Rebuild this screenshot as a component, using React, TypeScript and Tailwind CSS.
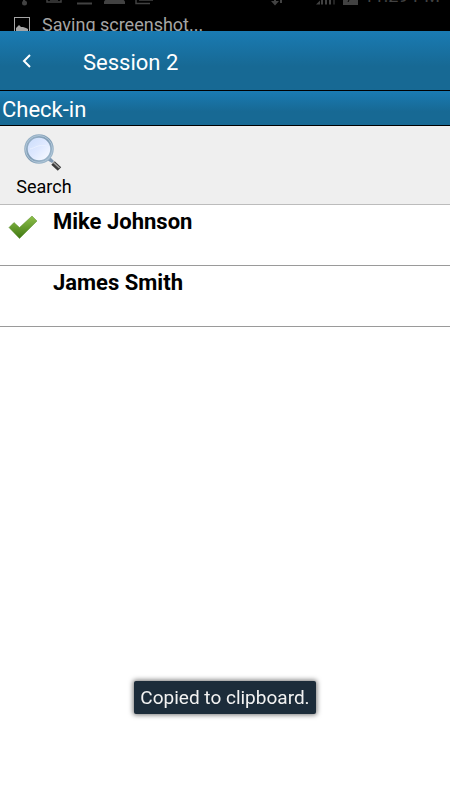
import React from 'react';

interface IAttendee {
    name: string,
    checkedIn: boolean
}

const attendees: IAttendee[] = [
    { name: 'Mike Johnson', checkedIn: true },
    { name: 'James Smith', checkedIn: false },
]

const StatusBar: React.FC = () => {
    return (
        <div className="h-[31px] overflow-hidden bg-black">
            <div className="-mt-4 flex h-7 justify-between text-[#424242]">
                <svg className="h-7 w-40" viewBox="0 0 160 28" fill="none" stroke="currentColor" strokeWidth="2" aria-hidden="true">
                    <path d="M24 10v8" />
                    <circle cx="24.500" cy="19" r="2.500" fill="currentColor" stroke="none" />
                    <path d="M47 8v10h14V8" strokeWidth="1.500" />
                    <path d="M50 16h8" strokeWidth="1.500" />
                    <path d="M77 19.500h15" />
                    <path d="M104 20v-2c0-2 3-3 6-4h9c3 1 6 2 6 4v2z" fill="currentColor" stroke="none" />
                    <path d="M136 10v9.500h14M139 16h14" strokeWidth="1.500" />
                </svg>
                <div className="flex gap-1 pr-2.5">
                    <svg className="h-7 w-[90px]" viewBox="0 0 90 28" fill="currentColor" aria-hidden="true">
                        <path d="M4 10h2v7h3l-4 4.500L1 17h3zM10 19v-7l3 4h-1v3z" />
                        <path d="M46 20.500l4-4v4zM51 14h2v6.500h-2zM55 12h2v8.500h-2zM59 10h2v10.500h-2z" />
                        <path d="M63 10h2v10.500h-2z" fill="#222222" />
                        <path d="M73 10h15v11H73z" />
                        <path d="M81 12l-3 6" stroke="#000000" />
                    </svg>
                    <span className="-mt-0.5 text-lg leading-7 whitespace-nowrap">11:29 PM</span>
                </div>
            </div>
            <div className="flex items-start pl-3.5 text-[#a5a5a5]">
                <svg className="mt-[5px] h-4 w-4 shrink-0" viewBox="0 0 16 16" fill="none" aria-hidden="true">
                    <rect x="0.500" y="0.500" width="15" height="15" stroke="currentColor" />
                    <path d="M2 14v-3l3-3 2 2 2 0 3 1 2 1v2z" fill="currentColor" />
                </svg>
                <p className="ml-3 pt-px text-lg leading-6 whitespace-nowrap">Saving screenshot...</p>
            </div>
        </div>
    )
}

const SearchIcon: React.FC = () => {
    return (
        <svg className="h-11 w-11" viewBox="0 0 44 44" fill="none" aria-hidden="true">
            <defs>
                <linearGradient id="rim" x1="0" y1="0" x2="1" y2="1">
                    <stop offset="0" stopColor="#9db6cb" />
                    <stop offset="0.500" stopColor="#7f9bb3" />
                    <stop offset="1" stopColor="#a5bfd2" />
                </linearGradient>
                <linearGradient id="glass" x1="0" y1="0" x2="1" y2="1">
                    <stop offset="0" stopColor="#c8dbfb" />
                    <stop offset="0.500" stopColor="#dfe9ff" />
                    <stop offset="1" stopColor="#ffffff" />
                </linearGradient>
            </defs>
            <path d="M25 27l3-3 4 4-2 2z" fill="#8099b3" />
            <path d="M31 30l6.500 6" stroke="#3a3a3a" strokeWidth="5" />
            <path d="M31 29l6.500 6" stroke="#a2a2a2" strokeWidth="1.500" />
            <circle cx="17" cy="16" r="13" fill="url(#glass)" stroke="url(#rim)" strokeWidth="3.500" />
            <circle cx="17" cy="16" r="13.500" stroke="#b0c6d8" />
            <path d="M8 16c5-1 8-5 17-3" stroke="#e9f1ff" />
        </svg>
    )
}

const CheckIcon: React.FC = () => {
    return (
        <svg className="h-6 w-[30px]" viewBox="0 0 30 24" role="img" aria-label="Checked in">
            <defs>
                <linearGradient id="check" x1="0" y1="0" x2="0" y2="1">
                    <stop offset="0" stopColor="#8fc04b" />
                    <stop offset="1" stopColor="#3f7811" />
                </linearGradient>
            </defs>
            <path d="M1 12.500L6 7.500l5.500 5L24 1l5 5-17.500 17.500z" fill="url(#check)" stroke="#548b25" strokeWidth="0.500" strokeLinejoin="round" />
        </svg>
    )
}

const AttendeeRow: React.FC<IAttendee> = ({ name, checkedIn }) => {
    return (
        <li className="flex h-[61px] border-b border-[#9a9a9a]">
            <div className="w-[53px] shrink-0 pt-2.5 pl-2">
                {checkedIn && <CheckIcon />}
            </div>
            <p className="pt-px text-[22px] leading-8 font-bold text-black">{name}</p>
        </li>
    )
}

export default function App() {
    return (
        <div className="relative min-h-screen bg-white font-[Roboto,sans-serif]">
            <StatusBar />
            <header className="flex h-[60px] items-center border-b border-black bg-linear-to-b from-[#1a7bb3] to-[#176994] to-60% pt-1 text-white">
                <button className="flex h-12 w-[83px] items-center pb-1 pl-[21px]" aria-label="Back">
                    <svg className="h-4 w-3" viewBox="0 0 12 16" fill="none" stroke="currentColor" strokeWidth="2" aria-hidden="true">
                        <path d="M9 2L3 8l6 6" />
                    </svg>
                </button>
                <h1 className="text-[22px] leading-7">Session 2</h1>
            </header>
            <h2 className="h-[35px] border-b border-black bg-linear-to-b from-[#1a7bb3] to-[#176994] to-60% pt-px pl-0.5 text-[22px] leading-9 text-white">Check-in</h2>
            <div className="h-[79px] border-b border-[#bcbcbc] bg-[#efefef]">
                <button className="flex w-[88px] flex-col items-center pt-[7px] text-black">
                    <SearchIcon />
                    <span className="-mt-0.5 text-lg leading-6">Search</span>
                </button>
            </div>
            <ul>
                {attendees.map((a) => <AttendeeRow key={a.name} {...a} />)}
            </ul>
            <div className="fixed inset-x-0 bottom-[86px] flex justify-center" role="status">
                <p className="rounded-xs bg-[#1c2c3a] px-1.5 pt-px text-[19px] leading-8 text-[#f2f2f2] shadow-[0_0_5px_1px_#777777]">Copied to clipboard.</p>
            </div>
        </div>
    )
}
